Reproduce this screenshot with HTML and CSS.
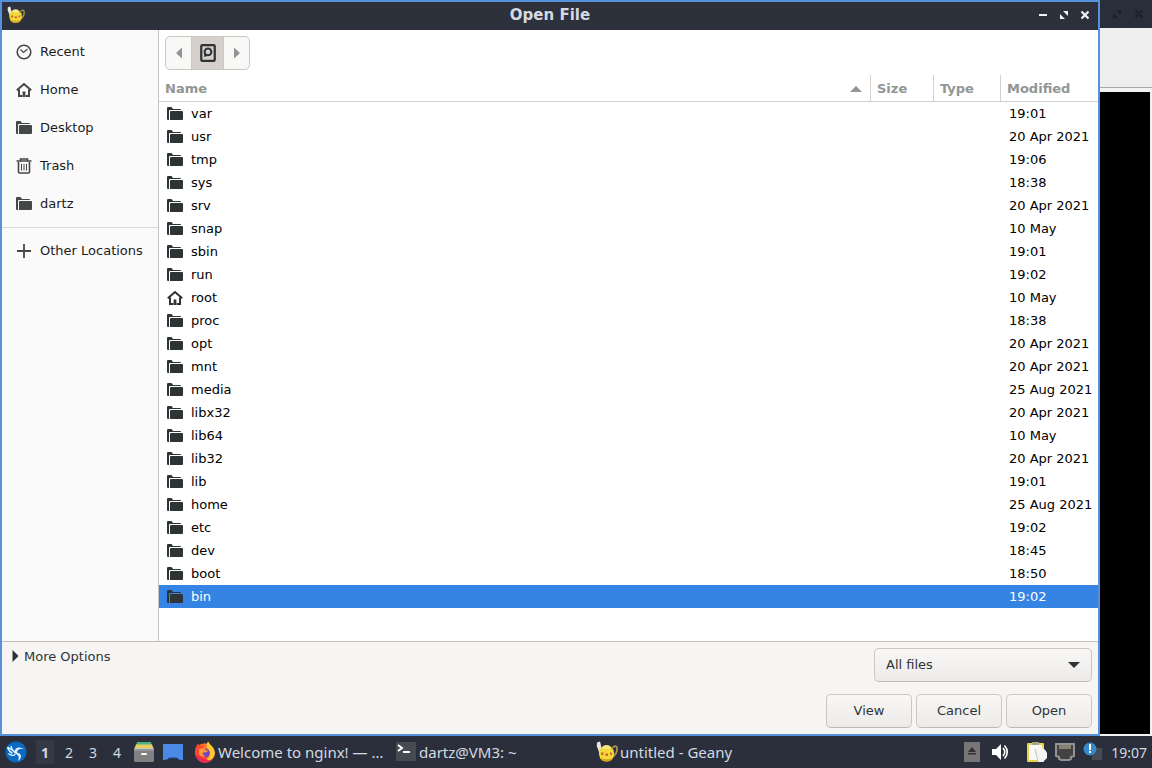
FILE: index.html
```html
<!DOCTYPE html>
<html lang="en">
<head>
    <meta charset="UTF-8">
    <meta name="viewport" content="width=device-width, initial-scale=1.0">
    <title>Open File</title>
    <link rel="stylesheet" href="styles.css">
</head>
<body>
    <!-- shared icons -->
    <svg class="sprite" aria-hidden="true">
        <symbol id="folder" viewBox="0 0 16 16">
            <path d="M0 2Q0 1 1 1h3.500l1.500 2h7q1 0 1 1H3Q2 4 2 5v9H1q-1 0-1-1z"/>
            <path d="M3 6q0-1 1-1h11q1 0 1 1v7q0 1-1 1H3z"/>
        </symbol>
        <symbol id="home" viewBox="0 0 16 16">
            <path d="M.8 8.300 8 2l7.200 6.300M3 7.500V14h3.400M13 7.500V14H9.600" fill="none" stroke="currentColor" stroke-width="2"/>
            <path d="M6.600 9.500h2.800V15H6.600z"/>
        </symbol>
        <symbol id="teapot" viewBox="0 0 22 22">
            <path d="M16 7q5-4 5 1t-4.500 8" fill="none" stroke="#a8924a" stroke-width="1.800"/>
            <path d="M5 14.500C2.500 12 2.500 8 .8 5.500L1 1.500 4 .5l1.200 5L6.500 9z" fill="#e9e7e0"/>
            <path d="M3.500 9Q5 6 10.500 6T17.500 9q1.500 4-.5 8-2 3.500-6.500 3.500T4 17q-2-4-.5-8z" fill="#f2d83a"/>
            <path d="M4 17q6.500 2.500 13 0-2 3.500-6.500 3.500T4 17z" fill="#d5a51f"/>
            <path d="M5.500 7q1.500-3 5-3t5 3q-5 2-10 0z" fill="#f8e880"/>
            <path d="M5 11.500h2.500V14H5zM9.500 12.500H12V15H9.500zM14 11.500h2V14h-2z" fill="#d9652c"/>
        </symbol>
    </svg>

    <div class="desktop">
        <div class="dialog">
            <header class="titlebar">
                <svg class="app-icon"><use href="#teapot"/></svg>
                <h1>Open File</h1>
                <div class="window-controls">
                    <button aria-label="Minimize"><svg viewBox="0 0 12 12"><path d="M2 5h8v2H2z"/></svg></button>
                    <button aria-label="Maximize"><svg viewBox="0 0 12 12"><path d="M5 2h5v5zM2 5v5h5z"/></svg></button>
                    <button aria-label="Close"><svg viewBox="0 0 12 12"><path d="m2.500 2.500 7 7m0-7-7 7" stroke="currentColor" stroke-width="2.200"/></svg></button>
                </div>
            </header>

            <div class="content">
                <nav class="sidebar">
                    <button class="place">
                        <svg viewBox="0 0 16 16"><circle cx="8" cy="8" r="6.800" fill="none" stroke="currentColor" stroke-width="1.600"/><path d="m4.500 5.500 3 3L11.500 5" fill="none" stroke="currentColor" stroke-width="1.200"/></svg>
                        Recent
                    </button>
                    <button class="place"><svg><use href="#home"/></svg>Home</button>
                    <button class="place"><svg><use href="#folder"/></svg>Desktop</button>
                    <button class="place">
                        <svg viewBox="0 0 16 16"><path d="M2.500 4v10q0 1 1 1h9q1 0 1-1V4" fill="none" stroke="currentColor" stroke-width="1.600"/><path d="M.5 3h15M4.500 2.500V1h7v1.500" fill="none" stroke="currentColor" stroke-width="1.600"/><path d="M5.500 6v6.500M8 6v6.500M10.500 6v6.500" stroke="currentColor"/></svg>
                        Trash
                    </button>
                    <button class="place"><svg><use href="#folder"/></svg>dartz</button>
                    <hr>
                    <button class="place">
                        <svg viewBox="0 0 16 16"><path d="M8 1v14M1 8h14" stroke="currentColor" stroke-width="1.800"/></svg>
                        Other Locations
                    </button>
                </nav>

                <main class="browser">
                    <div class="pathbar">
                        <button aria-label="Back"><svg viewBox="0 0 16 16"><path d="M11 2.500v11L5 8z"/></svg></button>
                        <button class="current" aria-label="File system root">
                            <svg viewBox="0 0 16 16"><rect x="2" y="1" width="12" height="14" rx="1" fill="none" stroke="currentColor" stroke-width="2"/><circle cx="8" cy="7" r="3" fill="none" stroke="currentColor" stroke-width="1.800"/><path d="M4.500 11.500V7L8 10.500z"/></svg>
                        </button>
                        <button aria-label="Forward"><svg viewBox="0 0 16 16"><path d="M5 2.500v11L11 8z"/></svg></button>
                    </div>

                    <table class="files">
                        <thead>
                            <tr>
                                <th class="col-name"><span>Name</span><svg viewBox="0 0 12 6"><path d="M0 6 6 0l6 6z"/></svg></th>
                                <th class="col-size">Size</th>
                                <th class="col-type">Type</th>
                                <th class="col-modified">Modified</th>
                            </tr>
                        </thead>
                        <tbody id="fileList"></tbody>
                    </table>
                </main>
            </div>

            <footer class="actions">
                <button class="more"><svg viewBox="0 0 6 12"><path d="M0 0v12l6-6z"/></svg>More Options</button>
                <div class="action-side">
                    <div class="filter">
                        <select aria-label="File type">
                            <option>All files</option>
                        </select>
                        <svg viewBox="0 0 12 6"><path d="M0 0h12L6 6z"/></svg>
                    </div>
                    <div class="buttons">
                        <button>View</button>
                        <button>Cancel</button>
                        <button>Open</button>
                    </div>
                </div>
            </footer>
        </div>

        <!-- window behind the dialog -->
        <div class="back-window">
            <div class="back-title">
                <svg viewBox="0 0 10 10"><path d="M4 1h5v5zM1 4v5h5z"/></svg>
                <svg viewBox="0 0 10 10"><path d="m1.500 1.500 7 7m0-7-7 7" stroke="currentColor" stroke-width="2"/></svg>
            </div>
            <div class="back-toolbar"></div>
            <div class="back-terminal"></div>
        </div>
    </div>

    <div class="taskbar">
        <button class="launcher" aria-label="Menu">
            <svg viewBox="0 0 22 22"><circle cx="11" cy="11" r="10.500" fill="#0a6ac4"/><path d="M2.500 6q1 4 5 6.500M6 5q.5 4 4 6.500M2.500 6 8 9.500M3.500 12.500q3 3 7 1" fill="none" stroke="#eaf6ff" stroke-width="1.300"/><path d="M9 12q1-5.500 5-5.500 2 0 5 1.500h-4q-3 .5-3 3.500 4 1 4 4 0 2.500-3 4.500 1.500-3 .5-5Q12 13 9 12z" fill="#eaf6ff"/></svg>
        </button>
        <div class="workspaces">
            <button class="active">1</button>
            <button>2</button>
            <button>3</button>
            <button>4</button>
        </div>
        <div class="quick">
            <button aria-label="File manager">
                <svg viewBox="0 0 20 22"><path d="M3 1h14l1 4H2z" fill="#4fae86"/><path d="M2 3.500h16l2 5H0z" fill="#e9cf62"/><path d="M1 7h18l1 4H0z" fill="#c9cbc2"/><rect y="8" width="20" height="13" rx="1" fill="#808080"/><rect y="8" width="20" height="2" fill="#969696"/><rect x="7" y="12" width="6" height="2" rx="1" fill="#fff"/></svg>
            </button>
            <button aria-label="Show desktop">
                <svg viewBox="0 0 20 22"><path d="M0 3h20v16h-4l-2-2H6l-2 2H0z" fill="#4a8ae6"/><path d="M2 19h2l2-2h8l2 2h2" fill="none" stroke="#1d4687"/></svg>
            </button>
        </div>
        <div class="tasks">
            <button>
                <svg viewBox="0 0 22 22"><circle cx="11" cy="12" r="9.800" fill="#ff7b2c"/><path d="M.8 12Q1 6 4 2.500L6 5l4-1.500L8 8l5 2 2 5-5 4-7-3z" fill="#f6482f"/><path d="M1 13q2 8 10 8.800 7-.5 9-6.800-6 5-12 2z" fill="#eb2b55"/><path d="M14 .3q1.500 3 4.500 5.700 4.500 6 .5 11-3 3-6 2 5-5 2-10-4-3-1-8.700z" fill="#ffc934"/><circle cx="11.500" cy="12" r="4.300" fill="#7045c8"/><path d="M5 8q4-2 7 1l2 1q-2 2-5 1.500-1 3 3 3.500-5 2-7-2z" fill="#ff9635"/></svg>
                Welcome to nginx! — …
            </button>
            <button>
                <svg viewBox="0 0 22 22"><rect x="1" y="1" width="20" height="19" fill="#464a51"/><path d="m3 4 4 3-4 3" fill="none" stroke="#fff" stroke-width="2"/><path d="M8 10h7v2H8z" fill="#fff"/></svg>
                dartz@VM3: ~
            </button>
            <button>
                <svg><use href="#teapot"/></svg>
                untitled - Geany
            </button>
        </div>
        <div class="tray">
            <button class="eject" aria-label="Removable media"><svg viewBox="0 0 16 20"><rect width="16" height="20" fill="#777"/><path d="M8 5l4 5H4zM4 11h8v1.500H4z" fill="#303030"/></svg></button>
            <button class="volume" aria-label="Volume"><svg viewBox="0 0 18 16"><path d="M0 5h4l5-5v16l-5-5H0z" fill="#fff"/><path d="M11 4q3.500 4 0 8M12.500 1.500q5.500 6.500 0 13" fill="none" stroke="#fff" stroke-width="1.600"/></svg></button>
            <button class="clip" aria-label="Clipboard"><svg viewBox="0 0 20 20"><rect y="1" width="17" height="19" rx="1" fill="#e5d44c"/><path d="M2 3h13v15H2z" fill="#f8f8f4"/><rect x="5" width="7" height="3" fill="#aaa58a"/><path d="M9 7q8-3 11 4v5l-4 4h-5z" fill="#f4f4f4"/><path d="m8 7 3 12" stroke="#b9b9b2" stroke-width=".8"/></svg></button>
            <button class="network" aria-label="Network"><svg viewBox="0 0 20 18"><path d="M1 1h18v12l-3 1v2l-2 1H6l-2-1v-2l-3-1z" fill="#434343" stroke="#929292" stroke-width="2"/><path d="M5 2v4M7 2v4M9 2v4M11 2v4M13 2v4M15 2v4" stroke="#c8c39b"/></svg></button>
            <button class="notice" aria-label="Updates"><svg viewBox="0 0 20 20"><path d="M9 6h10v12H9z" fill="#454b50"/><circle cx="7" cy="7" r="6.500" fill="#3889ca"/><path d="M6 2h2v6H6zM6 9h2v2H6z" fill="#fff"/></svg></button>
            <time>19:07</time>
        </div>
    </div>

    <script src="script.js"></script>
</body>
</html>
```

FILE: styles.css
```css
:root {
    --titlebar: #2c313c;
    --frame: #5591dd;
    --selected: #3584e4;
    --border: #cdc7c2;
    --text: #1a1c1c;
}

* {
    box-sizing: border-box;
}

body {
    margin: 0;
    height: 100vh;
    display: flex;
    flex-direction: column;
    overflow: hidden;
    font-family: "DejaVu Sans", sans-serif;
    font-size: 13px;
    color: var(--text);
    background: #000;
}

button {
    margin: 0;
    padding: 0;
    border: none;
    background: none;
    font: inherit;
    color: inherit;
}

svg {
    flex: none;
    fill: currentColor;
}

.sprite {
    display: none;
}

.desktop {
    flex: 1;
    min-height: 0;
    display: flex;
}

/* dialog */
.dialog {
    flex: 1;
    min-width: 0;
    display: flex;
    flex-direction: column;
    border: 2px solid var(--frame);
    background: #f6f5f4;
}

.titlebar {
    display: grid;
    grid-template-columns: 1fr auto 1fr;
    align-items: center;
    height: 28px;
    padding: 0 7px 2px;
    background: var(--titlebar);
    color: #d3dae3;
}

.titlebar h1 {
    margin: 0;
    font-size: 15px;
    line-height: 20px;
}

.app-icon {
    width: 18px;
    height: 18px;
    margin-left: -2px;
}

.window-controls {
    display: flex;
    justify-content: flex-end;
    gap: 9px;
}

.window-controls button {
    display: flex;
    width: 12px;
    height: 12px;
    color: #f2f3f5;
}

.window-controls svg {
    width: 12px;
    height: 12px;
}

.content {
    flex: 1;
    min-height: 0;
    display: flex;
    border-bottom: 1px solid #c2bebb;
}

.sidebar {
    display: flex;
    flex-direction: column;
    width: 157px;
    padding-top: 2px;
    background: #fafafa;
    border-right: 1px solid #c6c2bf;
}

.place {
    display: flex;
    align-items: center;
    gap: 8px;
    height: 38px;
    padding-left: 14px;
    white-space: nowrap;
}

.place svg {
    width: 16px;
    height: 16px;
    margin-top: 2px;
    color: #454848;
}

.sidebar hr {
    width: 100%;
    margin: 5px 0 3px;
    border: none;
    border-top: 1px solid #dcdcdc;
}

.browser {
    flex: 1;
    min-width: 0;
    background: #fff;
}

.pathbar {
    display: inline-flex;
    height: 34px;
    margin: 6px 6px 5px;
    vertical-align: top;
    border: 1px solid var(--border);
    border-radius: 5px;
    background: #f8f8f7;
    overflow: hidden;
}

.pathbar button {
    display: flex;
    align-items: center;
    justify-content: center;
    width: 25px;
    color: #929595;
}

.pathbar .current {
    width: 33px;
    background: #d5d0cc;
    border: solid var(--border);
    border-width: 0 1px;
    color: #2e3436;
}

.pathbar svg {
    width: 16px;
    height: 16px;
}

.pathbar .current svg {
    width: 18px;
    height: 18px;
}

/* file list */
.files {
    width: 100%;
    table-layout: fixed;
    border-collapse: separate;
    border-spacing: 0;
}

.files th {
    height: 27px;
    padding: 0 6px;
    text-align: left;
    color: #929595;
    border-right: 1px solid #d5d0cc;
    border-bottom: 1px solid #d5d0cc;
}

.files th:last-child {
    border-right: none;
}

.files th.col-name svg {
    float: right;
    width: 12px;
    height: 6px;
    margin: 5px 2px 0 0;
}

.col-size {
    width: 63px;
}

.col-type {
    width: 67px;
}

.col-modified {
    width: 97px;
}

.files td {
    height: 23px;
    padding: 0 0 0 8px;
    line-height: 17px;
    color: #000;
    white-space: nowrap;
}

.file-name {
    display: flex;
    align-items: center;
    gap: 8px;
}

.file-name svg {
    width: 16px;
    height: 16px;
    color: #2e3436;
}

.files .selected td {
    background: var(--selected);
    color: #fff;
}

/* bottom of the dialog */
.actions {
    display: flex;
    justify-content: space-between;
    align-items: flex-start;
    padding: 6px;
    color: #2e3436;
}

.more {
    display: flex;
    align-items: center;
    gap: 5px;
    height: 16px;
    padding-left: 4px;
}

.more svg {
    width: 7px;
    height: 12px;
}

.action-side {
    display: flex;
    flex-direction: column;
    align-items: flex-end;
    gap: 12px;
}

.filter {
    position: relative;
    width: 218px;
}

.filter select,
.buttons button {
    height: 34px;
    padding-bottom: 2px;
    border: 1px solid var(--border);
    border-bottom-color: #bfb8b1;
    border-radius: 5px;
    background: linear-gradient(to bottom, #f8f7f6, #edebe9);
}

.filter select {
    width: 100%;
    padding: 0 11px 2px;
    appearance: none;
    font: inherit;
    color: inherit;
}

/* arrow over the select */
.filter svg {
    position: absolute;
    top: 14px;
    right: 12px;
    width: 12px;
    height: 6px;
    pointer-events: none;
}

.buttons {
    display: flex;
    gap: 4px;
}

.buttons button {
    width: 86px;
}

/* window behind */
.back-window {
    display: flex;
    flex-direction: column;
    width: 52px;
    background: #f2f2f2;
}

.back-title {
    display: flex;
    align-items: center;
    justify-content: flex-end;
    gap: 12px;
    height: 28px;
    padding-right: 8px;
    background: #2a2d3a;
    color: #1d202b;
}

.back-title svg {
    width: 10px;
    height: 10px;
}

.back-toolbar {
    height: 60px;
    margin-bottom: 4px;
    background: #eee;
    border-bottom: 1px solid #a9a9a9;
}

.back-terminal {
    flex: 1;
    margin: 0 2px 2px 0;
    background: #000;
}

/* taskbar */
.taskbar {
    display: flex;
    align-items: center;
    height: 32px;
    padding: 0 5px;
    background: #2a2f3b;
    color: #d3dae3;
    font-family: "Noto Sans", sans-serif;
    font-size: 14px;
}

.taskbar button {
    display: flex;
    align-items: center;
    justify-content: center;
}

.launcher svg {
    width: 22px;
    height: 22px;
}

.workspaces {
    display: flex;
    gap: 6px;
    margin-left: 9px;
}

.workspaces button {
    width: 18px;
    height: 24px;
}

.workspaces .active {
    background: #343945;
    font-weight: bold;
}

.quick {
    display: flex;
    gap: 9px;
    margin-left: 8px;
}

.quick svg {
    width: 20px;
    height: 22px;
}

.tasks {
    display: flex;
    flex: 1;
    min-width: 0;
    margin-left: 11px;
    font-size: 15px;
}

.tasks button {
    justify-content: flex-start;
    gap: 2px;
    width: 201px;
    white-space: nowrap;
}

.tasks svg {
    width: 22px;
    height: 22px;
}

.tray {
    display: flex;
    align-items: center;
    gap: 8px;
}

.eject svg {
    width: 16px;
    height: 20px;
}

.volume {
    margin: 0 9px 0 4px;
}

.volume svg {
    width: 18px;
    height: 16px;
}

.clip svg,
.notice svg {
    width: 20px;
    height: 20px;
}

.network svg {
    width: 20px;
    height: 18px;
}
```

FILE: script.js
```js
const files = [
    ["var", "19:01"],
    ["usr", "20 Apr 2021"],
    ["tmp", "19:06"],
    ["sys", "18:38"],
    ["srv", "20 Apr 2021"],
    ["snap", "10 May"],
    ["sbin", "19:01"],
    ["run", "19:02"],
    ["root", "10 May"],
    ["proc", "18:38"],
    ["opt", "20 Apr 2021"],
    ["mnt", "20 Apr 2021"],
    ["media", "25 Aug 2021"],
    ["libx32", "20 Apr 2021"],
    ["lib64", "10 May"],
    ["lib32", "20 Apr 2021"],
    ["lib", "19:01"],
    ["home", "25 Aug 2021"],
    ["etc", "19:02"],
    ["dev", "18:45"],
    ["boot", "18:50"],
    ["bin", "19:02"]
];

const fileList = document.getElementById("fileList");

files.forEach(([name, modified]) => {
    const icon = name === "root" ? "home" : "folder";
    const row = document.createElement("tr");
    row.innerHTML = `<td><div class="file-name"><svg><use href="#${icon}"/></svg>${name}</div></td><td></td><td></td><td>${modified}</td>`;
    row.addEventListener("click", () => selectRow(row));
    fileList.appendChild(row);
});

function selectRow(row) {
    fileList.querySelectorAll(".selected").forEach(r => r.classList.remove("selected"));
    row.classList.add("selected");
}

selectRow(fileList.lastElementChild);
```
